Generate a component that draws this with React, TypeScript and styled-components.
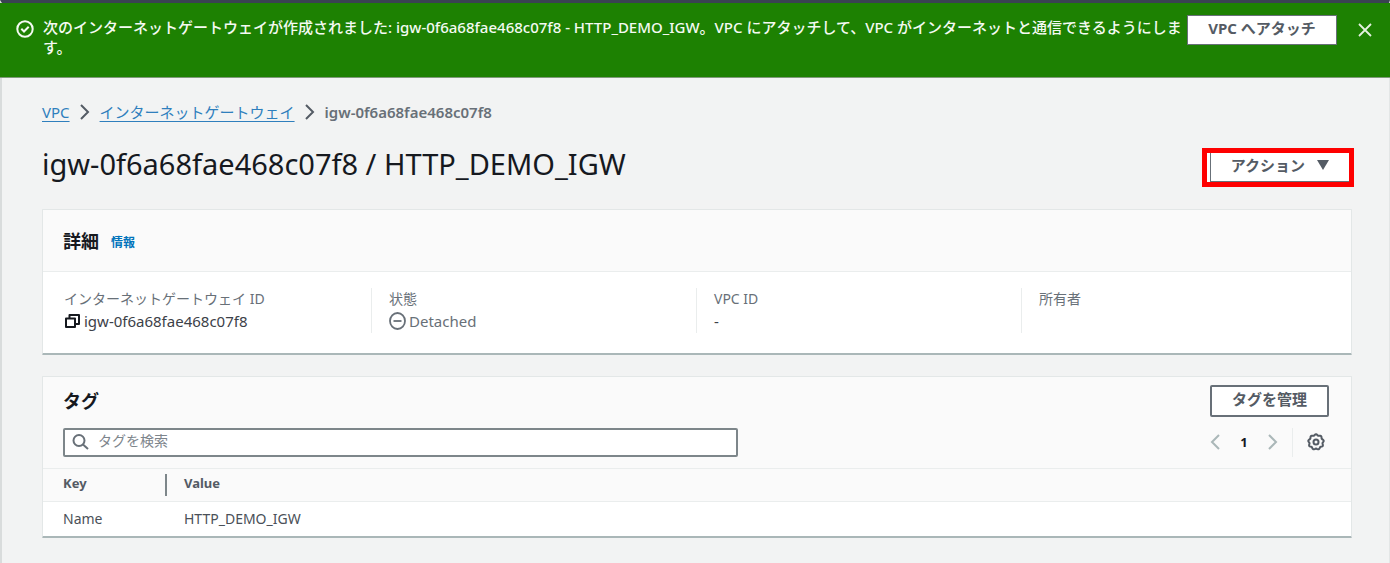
import React from "react";
import styled, { createGlobalStyle, css } from "styled-components";

const GlobalStyle = createGlobalStyle`
  *, *::before, *::after { box-sizing: border-box; }
  body {
    margin: 0;
    background: #f2f3f3;
    color: #545b64;
    font-family: "Noto Sans", "Noto Sans CJK JP", sans-serif;
    font-size: 14px;
    line-height: 20px;
  }
  button, input { font: inherit; color: inherit; }
`;

const Page = styled.div`
  min-height: 100vh;
  border-top: 3px solid #3a4252;
  border-left: 2px solid #d9dcdc;
  border-right: 1px solid #e3e6e6;
`;

const Banner = styled.section`
  display: flex;
  align-items: flex-start;
  min-height: 75px;
  margin-left: -2px;
  margin-right: -1px;
  padding: 12px 17px 0 16px;
  background: #1d8102;
  border-bottom: 1px solid #7f9a7a;
  color: #f4faf2;
`;

const BannerIcon = styled.svg`
  flex: none;
  width: 18px;
  height: 18px;
  margin: 5px 9px 0 0;
`;

const BannerText = styled.p`
  flex: 1;
  margin: 2px 4px 0 0;
  font-size: 15px;
  font-weight: 500;
`;

const Button = styled.button`
  display: inline-flex;
  align-items: center;
  justify-content: center;
  height: 32px;
  padding: 0 20px 4px;
  border: 2px solid #687078;
  border-radius: 2px;
  background: #fff;
  color: #545b64;
  font-size: 15px;
  font-weight: 700;
  white-space: nowrap;
  cursor: pointer;
`;

const BannerButton = styled(Button)`
  height: 30px;
  border-width: 1px;
  border-radius: 0;
  min-width: 150px;
`;

const IconButton = styled.button<{ $tone?: string }>`
  display: inline-flex;
  align-items: center;
  justify-content: center;
  padding: 0;
  border: 0;
  background: none;
  color: ${(p) => p.$tone ?? "#545b64"};
  cursor: pointer;
`;

const Dismiss = styled(IconButton)`
  width: 16px;
  height: 30px;
  margin-left: 20px;
`;

const Main = styled.main`
  padding: 24px 37px 24px 40px;
`;

const Breadcrumbs = styled.nav`
  display: flex;
  align-items: center;
  gap: 10px;
  height: 20px;
  font-size: 15px;
`;

const Crumb = styled.a`
  color: #2f7fbd;
  text-decoration: underline;
  text-underline-offset: 3px;
`;

const CurrentCrumb = styled.span`
  color: #687078;
  font-weight: 600;
`;

const TitleRow = styled.div`
  display: flex;
  align-items: flex-start;
  justify-content: space-between;
  margin: 26px -2px 22px 0;
`;

const Title = styled.h1`
  margin: 0;
  color: #16191f;
  font-size: 29px;
  font-weight: 400;
  line-height: 32px;
`;

const Highlight = styled.div`
  display: flex;
  width: 152px;
  padding-left: 3px;
  border: 5px solid #fe0000;
  background: #fff;
`;

const ActionButton = styled(Button)`
  flex: 1;
  gap: 12px;
  height: 29px;
  padding: 0 0 4px;
  border-width: 0 0 1px 1px;
  border-radius: 0;
`;

const Card = styled.section`
  margin-bottom: 21px;
  background: #fff;
  border: 1px solid #e3e7e7;
  border-bottom: 2px solid #aab7b8;
  border-radius: 1px;
`;

const CardHeader = styled.header`
  display: flex;
  align-items: center;
  gap: 12px;
  min-height: 62px;
  padding: 0 20px;
  background: #fafafa;
  border-bottom: 1px solid #eaeded;
`;

const CardTitle = styled.h2`
  margin: 0;
  color: #16191f;
  font-size: 18px;
  font-weight: 700;
  line-height: 24px;
`;

const InfoLink = styled.a`
  margin-top: 4px;
  color: #0073bb;
  font-size: 12px;
  font-weight: 700;
  text-decoration: none;
`;

const Facts = styled.dl`
  display: grid;
  grid-template-columns: repeat(4, 1fr);
  margin: 0;
  padding: 16px 5px 20px 3px;
`;

const Fact = styled.div`
  min-height: 45px;
  padding-left: 17px;
  border-left: 1px solid #eaeded;
  &:first-child { border-left-color: transparent; }
`;

const FactLabel = styled.dt`
  color: #687078;
  line-height: 22px;
`;

const FactValue = styled.dd<{ $muted?: boolean }>`
  display: flex;
  align-items: center;
  gap: 3px;
  margin: 0;
  font-size: 15px;
  line-height: 22px;
  color: ${(p) => (p.$muted ? "#687078" : "#3c4148")};
`;

const TagsHeader = styled.header`
  padding: 8px 22px 11px 20px;
  background: #fafafa;
`;

const HeaderRow = styled.div`
  display: flex;
  align-items: center;
  justify-content: space-between;
`;

const ToolRow = styled(HeaderRow)`
  margin-top: 10px;
`;

const SearchBox = styled.label`
  display: flex;
  align-items: center;
  gap: 9px;
  width: 60%;
  max-width: 675px;
  height: 29px;
  padding: 0 7px;
  border: 2px solid #7d868a;
  border-radius: 2px;
  background: #fff;
  color: #687078;
`;

const SearchInput = styled.input`
  flex: 1;
  min-width: 0;
  padding: 0 0 2px;
  border: 0;
  outline: 0;
  background: none;
  &::placeholder { color: #7d858c; opacity: 1; }
`;

const Pager = styled.div`
  display: flex;
  align-items: center;
  height: 30px;
  padding-right: 4px;
`;

const PageNumber = styled(IconButton)`
  width: 48px;
  color: #16191f;
  font-size: 13px;
  font-weight: 700;
`;

const PagerDivider = styled.span`
  width: 1px;
  height: 29px;
  margin: 0 14px;
  background: #eaeded;
`;

const TagTable = styled.table`
  width: 100%;
  border-collapse: collapse;
  table-layout: fixed;
  text-align: left;
`;

const cell = css`
  padding: 0 0 0 17px;
  &:first-child { width: 124px; padding-left: 20px; }
`;

const HeadCell = styled.th`
  ${cell}
  height: 33px;
  background: #fafafa;
  border-top: 1px solid #eaeded;
  border-bottom: 1px solid #eaeded;
  font-size: 13px;
  font-weight: 700;
`;

const HeadLabel = styled.div<{ $divided?: boolean }>`
  height: 22px;
  line-height: 18px;
  border-right: ${(p) => (p.$divided ? "2px solid #7d868a" : "0")};
`;

const Cell = styled.td`
  ${cell}
  height: 34px;
  color: #4a5058;
`;

const Chevron = ({ back }: { back?: boolean }) => (
  <svg width="10" height="16" viewBox="0 0 10 16" fill="none" stroke="currentColor" strokeWidth="2" aria-hidden>
    <path d={back ? "M9 1 2 8l7 7" : "M1 1l7 7-7 7"} />
  </svg>
);

const facts = [
  {
    label: "インターネットゲートウェイ ID",
    value: "igw-0f6a68fae468c07f8",
    icon: (
      <svg width="17" height="16" viewBox="0 0 17 16" fill="none" stroke="#16191f" strokeWidth="2" strokeLinejoin="round" aria-hidden>
        <path d="M2 5.5h9V14H2zM5.500 5V2H15v9h-3.500" />
      </svg>
    ),
  },
  {
    label: "状態",
    value: "Detached",
    muted: true,
    icon: (
      <svg width="17" height="18" viewBox="0 0 17 18" fill="none" stroke="currentColor" strokeWidth="1.800" aria-hidden>
        <ellipse cx="8.500" cy="9" rx="7.500" ry="8" />
        <path d="M4.500 9h8" />
      </svg>
    ),
  },
  { label: "VPC ID", value: "-" },
  { label: "所有者", value: "" },
];

const gear = Array.from({ length: 73 }, (_, i) => {
  const a = (i / 72) * Math.PI * 2;
  const r = 7.2 + 0.6 * Math.cos(a * 9);
  return `${i ? "L" : "M"}${(9 + r * Math.sin(a)).toFixed(2)} ${(9 - r * Math.cos(a)).toFixed(2)}`;
}).join("") + "Z";

export default function App() {
  return (
    <>
      <GlobalStyle />
      <Page>
        <Banner role="status">
          <BannerIcon viewBox="0 0 18 18" fill="none" stroke="currentColor" strokeWidth="2" aria-hidden>
            <circle cx="9" cy="9" r="7.700" />
            <path d="M5.300 8.800l2.700 2.700 4.700-4.700" />
          </BannerIcon>
          <BannerText>
            次のインターネットゲートウェイが作成されました: igw-0f6a68fae468c07f8 - HTTP_DEMO_IGW。VPC
            にアタッチして、VPC がインターネットと通信できるようにします。
          </BannerText>
          <BannerButton>VPC へアタッチ</BannerButton>
          <Dismiss $tone="#e4f1e0" aria-label="閉じる">
            <svg width="14" height="14" viewBox="0 0 14 14" stroke="currentColor" strokeWidth="1.800" aria-hidden>
              <path d="M1 1l12 12M13 1 1 13" />
            </svg>
          </Dismiss>
        </Banner>

        <Main>
          <Breadcrumbs>
            <Crumb href="#vpc">VPC</Crumb>
            <Chevron />
            <Crumb href="#gateways">インターネットゲートウェイ</Crumb>
            <Chevron />
            <CurrentCrumb>igw-0f6a68fae468c07f8</CurrentCrumb>
          </Breadcrumbs>

          <TitleRow>
            <Title>igw-0f6a68fae468c07f8 / HTTP_DEMO_IGW</Title>
            <Highlight>
              <ActionButton>
                アクション
                <svg width="12" height="10" viewBox="0 0 12 10" fill="currentColor" aria-hidden>
                  <path d="M0 0h12L6 10z" />
                </svg>
              </ActionButton>
            </Highlight>
          </TitleRow>

          <Card>
            <CardHeader>
              <CardTitle>詳細</CardTitle>
              <InfoLink href="#info">情報</InfoLink>
            </CardHeader>
            <Facts>
              {facts.map((f) => (
                <Fact key={f.label}>
                  <FactLabel>{f.label}</FactLabel>
                  <FactValue $muted={f.muted}>
                    {f.icon}
                    {f.value}
                  </FactValue>
                </Fact>
              ))}
            </Facts>
          </Card>

          <Card>
            <TagsHeader>
              <HeaderRow>
                <CardTitle>タグ</CardTitle>
                <Button>タグを管理</Button>
              </HeaderRow>
              <ToolRow>
                <SearchBox>
                  <svg width="17" height="16" viewBox="0 0 17 16" fill="none" stroke="currentColor" strokeWidth="2" aria-hidden>
                    <circle cx="7" cy="6.500" r="5.500" />
                    <path d="M11 10.500l5 4.500" />
                  </svg>
                  <SearchInput type="text" placeholder="タグを検索" aria-label="タグを検索" />
                </SearchBox>
                <Pager>
                  <IconButton $tone="#aab7b8" aria-label="前のページ"><Chevron back /></IconButton>
                  <PageNumber>1</PageNumber>
                  <IconButton $tone="#aab7b8" aria-label="次のページ"><Chevron /></IconButton>
                  <PagerDivider />
                  <IconButton aria-label="設定">
                    <svg width="18" height="18" viewBox="0 0 18 18" fill="none" stroke="currentColor" strokeWidth="2" aria-hidden>
                      <path d={gear} />
                      <circle cx="9" cy="9" r="2.500" />
                    </svg>
                  </IconButton>
                </Pager>
              </ToolRow>
            </TagsHeader>
            <TagTable>
              <thead>
                <tr>
                  <HeadCell scope="col"><HeadLabel $divided>Key</HeadLabel></HeadCell>
                  <HeadCell scope="col"><HeadLabel>Value</HeadLabel></HeadCell>
                </tr>
              </thead>
              <tbody>
                <tr>
                  <Cell>Name</Cell>
                  <Cell>HTTP_DEMO_IGW</Cell>
                </tr>
              </tbody>
            </TagTable>
          </Card>
        </Main>
      </Page>
    </>
  );
}
